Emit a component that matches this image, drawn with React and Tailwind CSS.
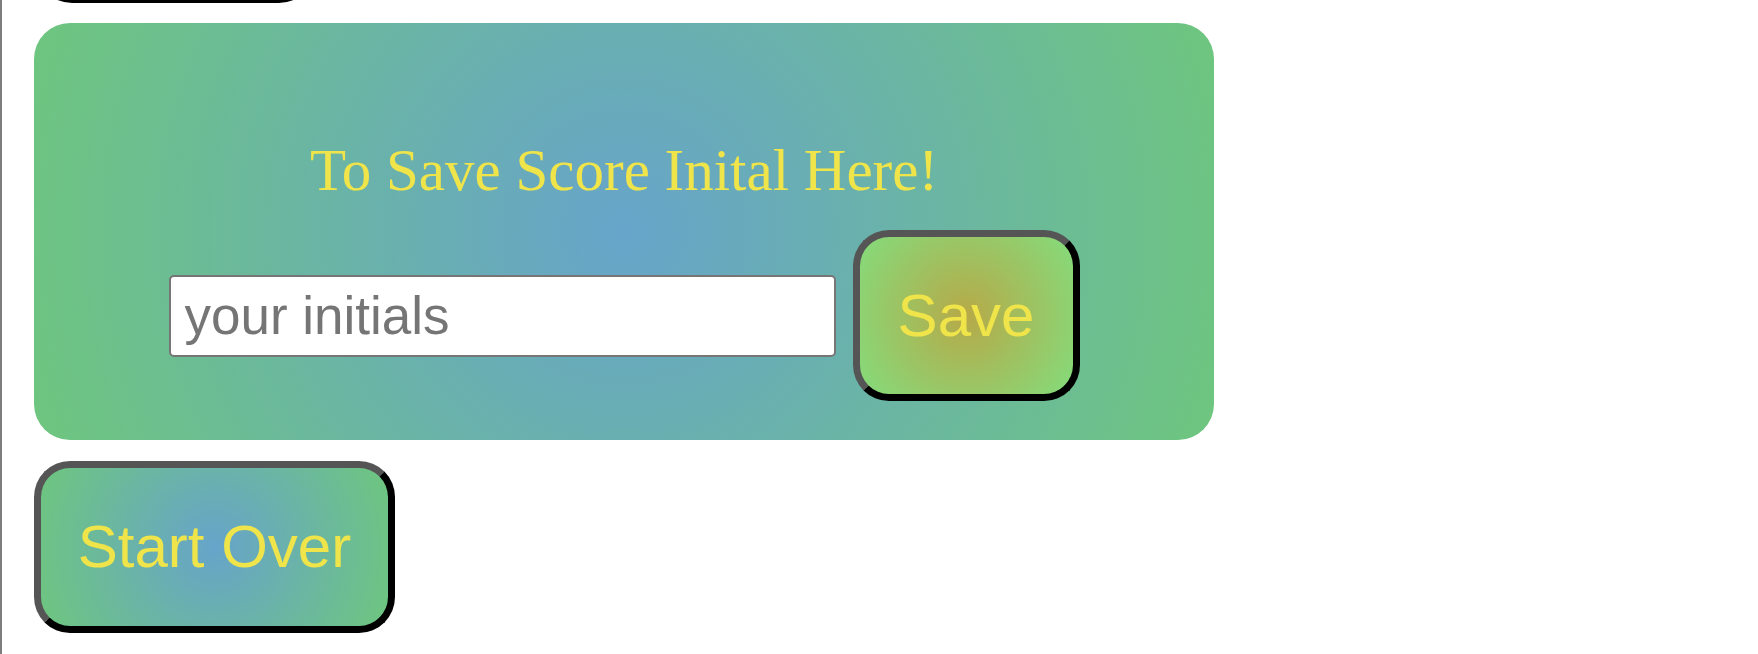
export default function App() {
  return (
    <div className="min-h-screen border-l-2 border-[#7d7d7d] bg-white pl-[32px] font-['Liberation_Sans',Arial,sans-serif]">
      {/* bottom edge of the button scrolled above */}
      <div className="h-[3px] w-[283px] overflow-hidden flex flex-col justify-end">
        <div className="h-[172px] w-[283px] shrink-0 rounded-[38px] border-[7px] border-t-[#555] border-l-[#555] border-b-black border-r-black" />
      </div>

      <section className="mt-[20px] w-[1180px] h-[417px] rounded-[36px] bg-[radial-gradient(circle,#67a4ca,#6ec67e)] pt-[115px] flex flex-col items-center">
        <h2 className="font-['Liberation_Serif','Times_New_Roman',serif] text-[59px] leading-[65px] text-[#efe449] font-normal">
          To Save Score Inital Here!
        </h2>
        <div className="mt-[27px] flex items-center gap-[17px]">
          <input
            type="text"
            placeholder="your initials"
            className="w-[667px] h-[82px] rounded-[5px] border-2 border-[#767676] bg-white pl-[14px] text-[53px] text-black placeholder:text-[#757575] outline-none"
          />
          <button className="w-[227px] h-[171px] rounded-[36px] border-[7px] border-t-[#555] border-l-[#555] border-b-black border-r-black bg-[radial-gradient(circle,#b7a948,#84dc7c)] text-[60px] text-[#efe449] flex items-center justify-center">
            Save
          </button>
        </div>
      </section>

      <button className="mt-[21px] w-[361px] h-[172px] rounded-[36px] border-[7px] border-t-[#555] border-l-[#555] border-b-black border-r-black bg-[radial-gradient(circle,#67a4ca,#6ec67e)] text-[60px] text-[#efe449] flex items-center justify-center">
        Start Over
      </button>
    </div>
  );
}
